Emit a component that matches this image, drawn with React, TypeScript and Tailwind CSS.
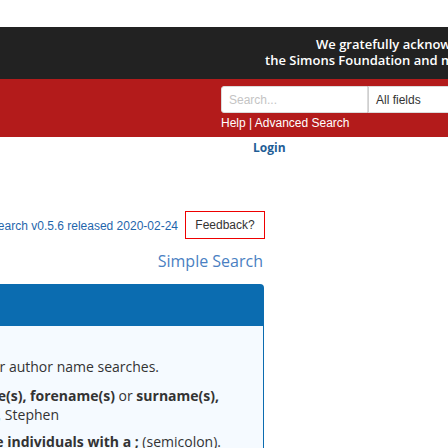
import React from "react";

export default function App() {
  return (
    <div className="w-[448px] h-[448px] overflow-hidden bg-white relative" style={{ fontFamily: '"Liberation Sans", Arial, sans-serif' }}>
      <div className="h-[27px]" />
      {/* dark banner */}
      <div className="h-[52px] bg-[#222222] pt-[9px] overflow-hidden whitespace-nowrap text-white text-[13px] leading-[16px] font-semibold" style={{ fontFamily: '"Open Sans", sans-serif' }}>
        <div className="pl-[316px]">We gratefully acknowledge support from</div>
        <div className="pl-[265px]">the Simons Foundation and member institutions.</div>
      </div>
      {/* red bar */}
      <div className="h-[58px] bg-[#b31b1b] pt-[7px] pl-[221px] overflow-hidden">
        <div className="flex w-[300px] h-[27px]">
          <div className="w-[147px] h-[27px] bg-white rounded-l-[3px] border border-[#dbdbdb] flex items-center pl-[7px] text-[12px] text-[#c4c4c4]">Search...</div>
          <div className="flex-1 h-[27px] bg-white border border-l-[#cfcfcf] border-[#dbdbdb] flex items-center pl-[7px] text-[12px] text-[#333]">All fields</div>
        </div>
        <div className="text-white text-[12px] leading-[16px] mt-[2px] whitespace-nowrap">Help | Advanced Search</div>
      </div>
      {/* login */}
      <div className="pl-[253px] pt-[3px] text-[12px] leading-[16px] font-bold text-[#1f5e96]" style={{ fontFamily: '"Open Sans", sans-serif' }}>Login</div>
      {/* version + feedback */}
      <div className="mt-[55px] flex items-center w-[265px] justify-end h-[28px]">
        <div className="whitespace-nowrap text-[12px] text-[#1f66ac] pt-[2px]">arXiv Search v0.5.6 released 2020-02-24</div>
        <div className="ml-[7px] shrink-0 w-[80px] h-[28px] border border-[#ee0000] flex items-center justify-center pb-[1px] text-[12px] text-[#333]">Feedback?</div>
      </div>
      {/* simple search */}
      <div className="w-[263px] flex justify-end mt-[12px] text-[16px] leading-[21px] text-[#4a7fc2]" style={{ fontFamily: '"Open Sans", sans-serif' }}>
        <span className="whitespace-nowrap">Simple Search</span>
      </div>
      {/* panel */}
      <div className="w-[264px] mt-[12px]" style={{ fontFamily: '"Open Sans", sans-serif' }}>
        <div className="h-[42px] bg-[#0b6cb0] rounded-tr-[4px]" />
        <div className="h-[200px] bg-[#f5faff] border-r border-[#0b6cb0] pt-[31px] text-[14px] leading-[19px] text-[#333]">
          <div className="w-[159px] flex justify-end mb-[10px]">
            <span className="whitespace-nowrap">Using the Author(s) field produces best results for author name searches.</span>
          </div>
          <div className="w-[219px] flex justify-end">
            <span className="whitespace-nowrap">For the most precise name search, follow <b>surname(s), forename(s)</b> or <b>surname(s),</b></span>
          </div>
          <div className="w-[59px] flex justify-end mb-[8px]">
            <span className="whitespace-nowrap"><b>initial(s)</b> pattern: example Hawking, S or Hawking, Stephen</span>
          </div>
          <div className="w-[221px] flex justify-end">
            <span className="whitespace-nowrap">For best results on multiple author names, <b>separate individuals with a ;</b> (semicolon).</span>
          </div>
        </div>
      </div>
    </div>
  );
}
